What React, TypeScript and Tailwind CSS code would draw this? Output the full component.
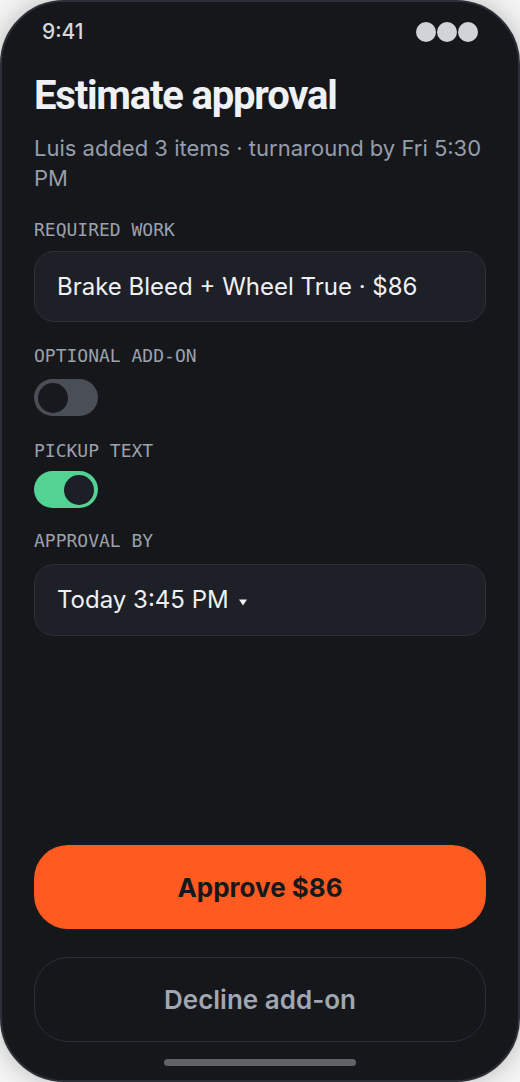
import { useState } from 'react'

const sans = "font-['Inter','Noto_Sans',sans-serif]"
const mono = "font-['DejaVu_Sans_Mono','Liberation_Mono',monospace]"

function Label({ children }: { children: string }) {
  return <div className={`${mono} h-5 text-[18px] leading-5 text-[#9aa1ad]`}>{children}</div>
}

function Toggle({ on, onChange }: { on: boolean; onChange: () => void }) {
  return (
    <button
      type="button"
      onClick={onChange}
      className={`flex h-[37px] w-16 items-center rounded-full px-[4px] ${
        on ? 'justify-end bg-[#52d394]' : 'justify-start bg-[#4a4f57]'
      }`}
    >
      <span className={`h-[30px] w-[30px] rounded-full ${on ? 'bg-[#1d1f26]' : 'bg-[#17191e]'}`} />
    </button>
  )
}

export default function App() {
  const [addOn, setAddOn] = useState(false)
  const [pickup, setPickup] = useState(true)

  return (
    <div className={`${sans} h-[1082px] w-[520px] bg-[#f4f4f4]`}>
      <div className="flex h-full w-full flex-col overflow-hidden rounded-[64px] border-2 border-[#2b2f37] bg-[#16171b] px-8 shadow-[0_0_24px_rgba(0,0,0,0.25)]">
        {/* Status bar */}
        <div className="mt-[18px] flex h-6 shrink-0 items-center justify-between pl-2 pr-2">
          <span className="text-[21px] font-medium text-[#d4d7dc]">9:41</span>
          <div className="flex gap-[1px]">
            <span className="h-[20px] w-[20px] rounded-full bg-[#d0d3d8]" />
            <span className="h-[20px] w-[20px] rounded-full bg-[#d0d3d8]" />
            <span className="h-[20px] w-[20px] rounded-full bg-[#d0d3d8]" />
          </div>
        </div>

        <h1 className="mt-[30px] font-['Roboto',sans-serif] text-[40px] font-bold leading-[44px] tracking-[-0.03em] text-[#eff1f4]">
          Estimate approval
        </h1>
        <p className="mt-[15px] text-[22px] leading-[30px] text-[#969daa]">
          Luis added 3 items · turnaround by Fri 5:30 PM
        </p>

        <div className="mt-[27px] flex flex-col">
          <Label>REQUIRED WORK</Label>
          <div className="mt-[11px] flex h-[71px] items-center rounded-[20px] border-[1.5px] border-[#2c3038] bg-[#1e2028] px-[22px] text-[24px] text-[#eef0f3]">
            Brake Bleed + Wheel True · $86
          </div>
        </div>

        <div className="mt-[24px] flex flex-col">
          <Label>OPTIONAL ADD-ON</Label>
          <div className="mt-[13px]">
            <Toggle on={addOn} onChange={() => setAddOn(!addOn)} />
          </div>
        </div>

        <div className="mt-[25px] flex flex-col">
          <Label>PICKUP TEXT</Label>
          <div className="mt-[10px]">
            <Toggle on={pickup} onChange={() => setPickup(!pickup)} />
          </div>
        </div>

        <div className="mt-[23px] flex flex-col">
          <Label>APPROVAL BY</Label>
          <div className="mt-[13px] flex h-[72px] items-center gap-[10px] rounded-[20px] border-[1.5px] border-[#2c3038] bg-[#1e2028] px-[22px] text-[24px] text-[#eef0f3]">
            Today 3:45 PM
            <svg width="8" height="7" viewBox="0 0 8 7" className="mt-[4px]">
              <path d="M0 0.5h8L4 6.5z" fill="#eef0f3" />
            </svg>
          </div>
        </div>

        <div className="flex-1" />

        <button
          type="button"
          className="flex h-[84px] shrink-0 items-center justify-center rounded-[34px] bg-[#ff5a1f] text-[26px] font-bold text-[#17181c]"
        >
          Approve $86
        </button>
        <button
          type="button"
          className="mt-[28px] flex h-[85px] shrink-0 items-center justify-center rounded-[34px] border-[1.5px] border-[#2c3038] text-[26px] font-semibold text-[#a0a6b2]"
        >
          Decline add-on
        </button>

        <div className="mb-[14px] mt-[17px] flex shrink-0 justify-center">
          <span className="h-[7px] w-48 rounded-full bg-[#5f6368]" />
        </div>
      </div>
    </div>
  )
}
